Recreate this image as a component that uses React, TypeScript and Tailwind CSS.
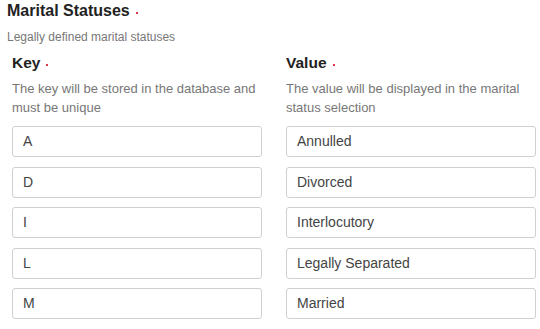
const rows = [
  { key: "A", value: "Annulled" },
  { key: "D", value: "Divorced" },
  { key: "I", value: "Interlocutory" },
  { key: "L", value: "Legally Separated" },
  { key: "M", value: "Married" },
]

function Dot() {
  return <span className="ml-[6px] inline-block h-[2px] w-[2px] translate-y-[2px] bg-[#e8334a]" />
}

export default function App() {
  return (
    <div className="h-[329px] w-[540px] overflow-hidden bg-white font-['Liberation_Sans',Arial,sans-serif] text-[#333]">
      <div className="px-[7px] pt-[1px]">
        <h1 className="flex items-center text-[16px] font-bold leading-[20px] text-[#222]">
          Marital Statuses
          <Dot />
        </h1>
        <p className="mt-[6px] text-[12px] leading-[20px] text-[#777]">Legally defined marital statuses</p>
      </div>
      <div className="mt-[6px] grid grid-cols-[250px_250px] gap-x-[24px] px-[12px]">
        <div>
          <h2 className="flex items-center text-[15.5px] font-bold leading-[20px] text-[#222]">
            Key
            <Dot />
          </h2>
          <p className="mt-[6px] text-[13px] leading-[19px] text-[#777]">
            The key will be stored in the database and must be unique
          </p>
        </div>
        <div>
          <h2 className="flex items-center text-[15.5px] font-bold leading-[20px] text-[#222]">
            Value
            <Dot />
          </h2>
          <p className="mt-[6px] text-[13px] leading-[19px] text-[#777]">
            The value will be displayed in the marital status selection
          </p>
        </div>
      </div>
      <div className="mt-[9px] flex flex-col gap-[9.5px] px-[12px]">
        {rows.map((row) => (
          <div key={row.key} className="grid grid-cols-[250px_250px] gap-x-[24px]">
            <div className="flex h-[31px] items-center rounded-[3px] border border-[#d0d0d0] px-[10px] text-[14px] text-[#444]">
              {row.key}
            </div>
            <div className="flex h-[31px] items-center rounded-[3px] border border-[#d0d0d0] px-[10px] text-[14px] text-[#444]">
              {row.value}
            </div>
          </div>
        ))}
      </div>
    </div>
  )
}
